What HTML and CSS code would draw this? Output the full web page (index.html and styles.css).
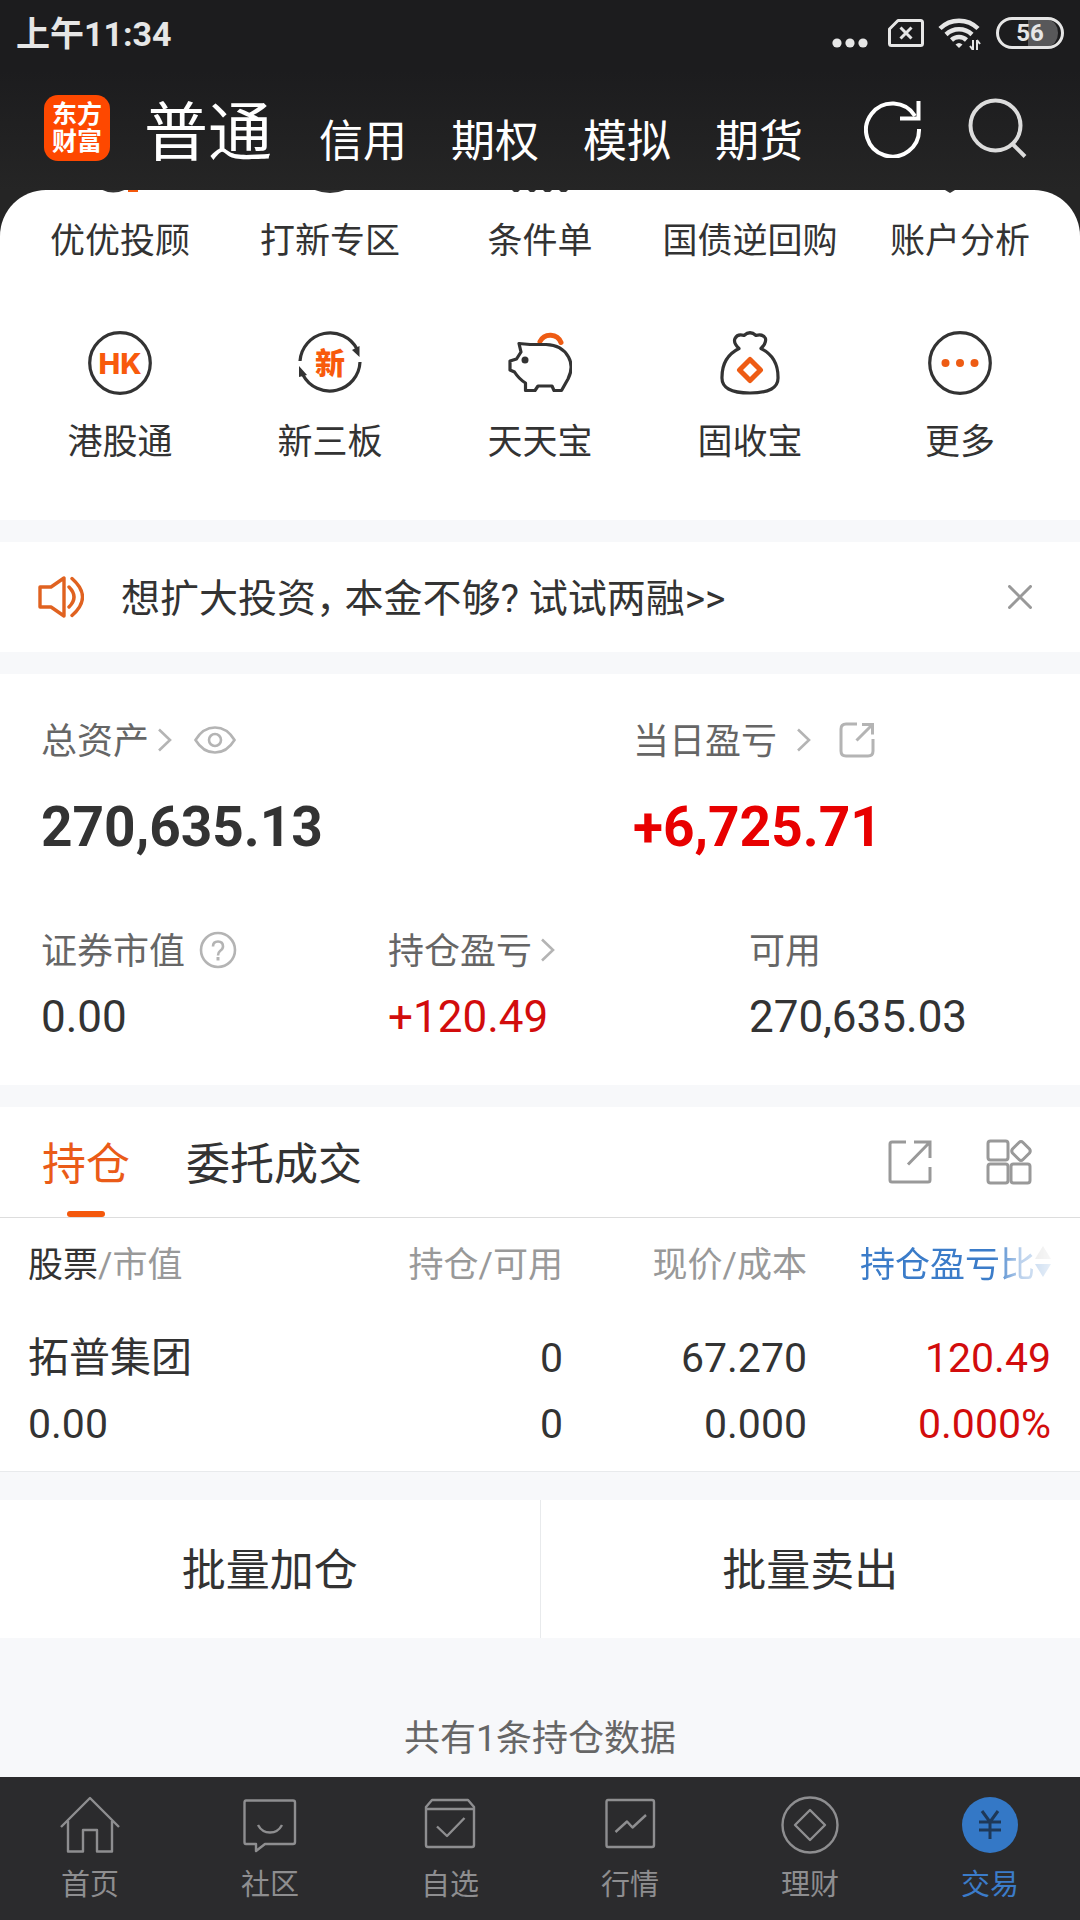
FILE: index.html
```html
<!DOCTYPE html>
<html lang="zh-CN">
<head>
<meta charset="utf-8">
<meta name="viewport" content="width=device-width, initial-scale=1">
<title>交易</title>
<link rel="stylesheet" href="styles.css">
</head>
<body>
<header class="top">
  <div class="status">
    <span class="clock">上午11:34</span>
    <div class="status-icons">
      <svg class="dots" width="36" height="30" viewBox="0 0 36 30" fill="#e6e6e6"><circle cx="5" cy="25" r="4.6"/><circle cx="18" cy="25" r="4.6"/><circle cx="31" cy="25" r="4.6"/></svg>
      <svg width="36" height="30" viewBox="0 0 36 30" fill="none" stroke="#e6e6e6" stroke-width="3"><path d="M10 2.500H32.500Q34.500 2.500 34.500 4.500V25.500Q34.500 27.500 32.500 27.500H3.500Q1.500 27.500 1.500 25.500V11Z" stroke-linejoin="round"/><path d="M12.500 9.500l11 11M23.500 9.500l-11 11"/></svg>
      <svg width="44" height="34" viewBox="0 0 44 34" fill="none" stroke="#e6e6e6" stroke-width="4.500"><path d="M2 12.500A27 27 0 0 1 40 12.500"/><path d="M8 18.500A19 19 0 0 1 34 18.500"/><path d="M13.500 24A11 11 0 0 1 28.500 24"/><path d="M17.500 28.500L21 32l3.500-3.500Q21 25.500 17.500 28.500Z" fill="#e6e6e6" stroke="none"/><path d="M35 24v10M35 34l-3-4M39 34V24M39 24l3 4" stroke-width="2"/></svg>
      <span class="battery">56</span>
    </div>
  </div>
  <div class="appbar">
    <a class="logo" href="#"><span>东方</span><span>财富</span></a>
    <nav class="accounts">
      <a class="current" href="#">普通</a>
      <a href="#">信用</a>
      <a href="#">期权</a>
      <a href="#">模拟</a>
      <a href="#">期货</a>
    </nav>
    <div class="tools">
      <button type="button" aria-label="刷新"><svg width="58" height="60" viewBox="0 0 58 60" fill="none" stroke="#fff" stroke-width="4"><path d="M55 31A26.500 26.500 0 1 1 51 18"/><path d="M54.500 3V20.500H36"/></svg></button>
      <button type="button" aria-label="搜索"><svg width="60" height="60" viewBox="0 0 60 60" fill="none" stroke="#dcdcdc" stroke-width="4"><circle cx="27.500" cy="27.500" r="25"/><path d="M44.500 46L57 58.500"/></svg></button>
    </div>
  </div>
</header>

<main>
  <div class="backdrop">
  <section class="panel shortcuts">
    <a href="#"><svg width="64" height="4" viewBox="0 0 64 4" fill="none" stroke-width="4"><path d="M15-2Q25 3 36-2" stroke="#333"/><path d="M40 0L50 0" stroke="#f4580c"/></svg>优优投顾</a>
    <a href="#"><svg width="64" height="4" viewBox="0 0 64 4" fill="none" stroke="#333" stroke-width="3"><path d="M16-2Q32 5 48-2"/></svg>打新专区</a>
    <a href="#"><svg width="64" height="4" viewBox="0 0 64 4" fill="#333"><path d="M4 0h8l-2 2H6zM20 0h8l-2 2h-4zM35 0h9l-2 2h-5zM51 0h9l-2 2h-5z"/></svg>条件单</a>
    <a href="#"><svg width="64" height="4" viewBox="0 0 64 4"></svg>国债逆回购</a>
    <a href="#"><svg width="64" height="4" viewBox="0 0 64 4" fill="#333"><path d="M17 0h10l-5 3z"/></svg>账户分析</a>
    <a href="#"><svg width="64" height="64" viewBox="0 0 64 64" fill="none"><circle cx="32" cy="32" r="30.300" stroke="#333" stroke-width="3.200"/><text x="32" y="42.500" text-anchor="middle" class="hk">HK</text></svg>港股通</a>
    <a href="#"><svg width="64" height="64" viewBox="0 0 64 64" fill="none"><path d="M2 30A30.300 30.300 0 0 1 59 18M62 31A30.300 30.300 0 0 1 5 44" stroke="#333" stroke-width="3.200"/><path d="M54 19l7.500-4v11zM1 46V35l8 9z" fill="#333"/><text x="32" y="43" text-anchor="middle" class="xin">新</text></svg>新三板</a>
    <a href="#"><svg width="64" height="64" viewBox="0 0 64 64" fill="none" stroke="#333" stroke-width="3.200" stroke-linejoin="round"><path d="M32 10.500A11.500 11.500 0 0 1 53 11.500" stroke="#ee5c14" stroke-width="5" stroke-linecap="round"/><path d="M22 13.500L11 12.500L13 21L8.500 28L2 30V39L6.500 41Q11 48 17.500 52V59.500H27L30 55H44L46 59.500H53.500L60 48Q66 36 60.500 26Q54 14 38 13.500Z" fill="#fff"/><circle cx="17" cy="29" r="3.500" fill="#333" stroke="none"/></svg>天天宝</a>
    <a href="#"><svg width="64" height="64" viewBox="0 0 64 64" fill="none" stroke="#333" stroke-width="3.200" stroke-linejoin="round"><path d="M21 17.500Q15 12 17 7.500Q19.500 2.500 26 4.500Q32-1 38 4.500Q45 2.500 47.500 7.500Q48.500 12 43 17.500Q60 26 60 46Q61 62 32 62Q3 62 4 46Q4 26 21 17.500Z"/><path d="M32 28.500L42.500 39L32 49.500L21.500 39Z" stroke="#ee5c14" stroke-width="5"/></svg>固收宝</a>
    <a href="#"><svg width="64" height="64" viewBox="0 0 64 64" fill="none"><circle cx="32" cy="32" r="30.300" stroke="#333" stroke-width="3.200"/><g fill="#ee5c14"><circle cx="17.500" cy="32" r="4"/><circle cx="32" cy="32" r="4"/><circle cx="46.500" cy="32" r="4"/></g></svg>更多</a>
  </section>
  </div>

  <section class="panel notice">
    <svg width="46" height="42" viewBox="0 0 46 42" fill="none" stroke="#e06220" stroke-width="3.400" stroke-linejoin="round"><path d="M2 11H13L26 2V40L13 31H2Z"/><path d="M31 11Q41 21 31 31M34 2.500Q55 21 34 39.500" stroke-linecap="round"/></svg>
    <a href="#">想扩大投资<span class="comma">，</span>本金不够? 试试两融&gt;&gt;</a>
    <button type="button" aria-label="关闭"><svg width="24" height="24" viewBox="0 0 24 24" stroke="#999" stroke-width="3" stroke-linecap="round"><path d="M1.500 1.500l21 21M22.500 1.500l-21 21"/></svg></button>
  </section>

  <section class="panel assets">
    <div class="totals">
      <div>
        <div class="label"><span>总资产</span><svg class="chev" width="14" height="24" viewBox="0 0 14 24"><path d="M1 1.500L12 12L1 22.500"/></svg><svg class="eye" width="42" height="28" viewBox="0 0 42 28" fill="none" stroke="#b4b4b4" stroke-width="2.600"><path d="M1.500 14Q9 1.500 21 1.500T40.500 14Q33 26.500 21 26.500T1.500 14Z"/><circle cx="21" cy="14" r="6"/></svg></div>
        <div class="big">270,635.13</div>
      </div>
      <div>
        <div class="label"><span>当日盈亏</span><svg class="chev wide" width="14" height="24" viewBox="0 0 14 24"><path d="M1 1.500L12 12L1 22.500"/></svg><svg class="share" width="36" height="36" viewBox="0 0 36 36" fill="none" stroke="#b4b4b4" stroke-width="3"><path d="M18 2H7Q2 2 2 7V29Q2 34 7 34H29Q34 34 34 29V17M17.500 18.500L33 3M23 2.500H33.500V12.500"/></svg></div>
        <div class="big rise">+6,725.71</div>
      </div>
    </div>
    <div class="details">
      <div>
        <div class="label"><span>证券市值</span><svg class="help" width="38" height="38" viewBox="0 0 38 38" fill="none" stroke="#b4b4b4" stroke-width="2.600"><circle cx="19" cy="19" r="17"/><path d="M14 15.500Q14 10.500 19 10.500T24 15.500Q24 18 21 20Q19 21.500 19 24.500" /><path d="M19 26v3.500" stroke-width="3"/></svg></div>
        <div class="value">0.00</div>
      </div>
      <div>
        <div class="label"><span>持仓盈亏</span><svg class="chev" width="14" height="24" viewBox="0 0 14 24"><path d="M1 1.500L12 12L1 22.500"/></svg></div>
        <div class="value loss">+120.49</div>
      </div>
      <div>
        <div class="label"><span>可用</span></div>
        <div class="value">270,635.03</div>
      </div>
    </div>
  </section>

  <section class="panel">
    <div class="tabs">
      <button type="button" class="tab active">持仓</button>
      <button type="button" class="tab">委托成交</button>
      <div class="tab-tools">
        <button type="button" aria-label="分享"><svg width="44" height="44" viewBox="0 0 44 44" fill="none" stroke="#999" stroke-width="3"><path d="M18 2H4Q2 2 2 4V40Q2 42 4 42H40Q42 42 42 40V27M20 24.500L41 3M26 2H42V18" /></svg></button>
        <button type="button" aria-label="布局"><svg width="46" height="46" viewBox="0 0 46 46" fill="none" stroke="#999" stroke-width="3"><rect x="2" y="2" width="20" height="19" rx="2.500"/><rect x="2" y="25" width="20" height="19" rx="2.500"/><rect x="25" y="25" width="19" height="19" rx="2.500"/><path d="M33 3.500Q35 1.500 37 3.500L43.500 10Q45 12 43.500 14L37 20.500Q35 22.500 33 20.500L26.500 14Q25 12 26.500 10Z"/></svg></button>
      </div>
    </div>
    <table class="holdings">
      <thead>
        <tr>
          <th scope="col"><b>股票</b>/市值</th>
          <th scope="col">持仓/可用</th>
          <th scope="col">现价/成本</th>
          <th scope="col"><button type="button" class="sort">持仓盈亏比<svg width="16" height="32" viewBox="0 0 16 32"><path d="M0 14L8 1L16 14Z" fill="#bbb"/><path d="M0 19L8 32L16 19Z" fill="#3b7cc9"/></svg></button></th>
        </tr>
      </thead>
      <tbody>
        <tr><td>拓普集团</td><td>0</td><td>67.270</td><td class="loss">120.49</td></tr>
        <tr><td>0.00</td><td>0</td><td>0.000</td><td class="loss">0.000%</td></tr>
      </tbody>
    </table>
  </section>

  <div class="batch">
    <button type="button">批量加仓</button>
    <button type="button">批量卖出</button>
  </div>
  <p class="count">共有1条持仓数据</p>
</main>

<nav class="bottom">
  <a href="#"><svg width="60" height="60" viewBox="0 0 60 60"><path d="M1 31L30 2L59 31M8 25V55.500H23V34H37V55.500H52V25"/></svg>首页</a>
  <a href="#"><svg width="60" height="60" viewBox="0 0 60 60"><path d="M6 4.500H53Q55 4.500 55 6.500V46Q55 48 53 48H25L16 55V48H6Q4.500 48 4.500 46V6.500Q4.500 4.500 6 4.500ZM18 29Q22 36.500 30 36.500T42 29"/></svg>社区</a>
  <a href="#"><svg width="60" height="60" viewBox="0 0 60 60"><path d="M12 4H48L54 11V49Q54 51 52 51H8Q6 51 6 49V11ZM6 13H54M17 30.500L27 40L44.500 22"/></svg>自选</a>
  <a href="#"><svg width="60" height="60" viewBox="0 0 60 60"><path d="M8 4H52Q54 4 54 6V49Q54 51 52 51H8Q6.500 51 6.500 49V6Q6.500 4 8 4ZM15.500 36L27 25.500L32.500 31.500L46 19"/></svg>行情</a>
  <a href="#"><svg width="60" height="60" viewBox="0 0 60 60"><circle cx="30" cy="29" r="27.500"/><path d="M30 14L45 29L30 44L15 29Z"/></svg>理财</a>
  <a class="on" href="#"><svg width="60" height="60" viewBox="0 0 60 60"><circle cx="30" cy="29" r="28" fill="#3478c6" stroke="none"/><path d="M22 15L30 26L38 15M30 26V43M19 26H41M19 34H41" stroke="#1e3857" stroke-width="3"/></svg>交易</a>
</nav>
</body>
</html>
```
FILE: styles.css
```css
* { box-sizing: border-box; }

body {
  margin: 0;
  min-height: 100vh;
  display: flex;
  flex-direction: column;
  background: #f7f8fa;
  color: #333;
  font-family: Roboto, "Noto Sans CJK SC", sans-serif;
}

a { color: inherit; text-decoration: none; }
svg { display: block; flex: none; }

button {
  margin: 0;
  padding: 0;
  border: 0;
  background: none;
  color: inherit;
  font: inherit;
}

/* Status bar and account switcher */
.top {
  background: linear-gradient(#1c1c1e 70px, #252525);
  color: #fff;
}

.status {
  display: flex;
  align-items: center;
  justify-content: space-between;
  height: 66px;
  padding: 0 16px;
  color: #e6e6e6;
}

.clock { padding-bottom: 4px; font-size: 34px; font-weight: 700; }

.status-icons { display: flex; align-items: center; gap: 14px; }
.dots { margin-right: 6px; }

.battery {
  width: 68px;
  height: 32px;
  border: 3px solid #e6e6e6;
  border-radius: 16px;
  padding: 0 3px;
  font-size: 24px;
  font-weight: 700;
  line-height: 26px;
  text-align: center;
  background: linear-gradient(90deg, transparent 46%, #58585a 46%) content-box;
}

.appbar {
  display: flex;
  align-items: center;
  height: 124px;
  padding: 0 52px 0 44px;
}

.logo {
  display: flex;
  flex-direction: column;
  align-items: center;
  justify-content: center;
  width: 66px;
  height: 66px;
  border-radius: 14px;
  background: #fe4800;
  font-size: 25px;
  font-weight: 700;
  line-height: 27px;
}

.accounts {
  display: flex;
  align-items: flex-end;
  gap: 44px;
  margin: 12px 0 0 34px;
  font-size: 44px;
  line-height: 64px;
}

.accounts .current { margin-right: 3px; font-size: 64px; line-height: 80px; }

.tools { display: flex; gap: 46px; margin-left: auto; }

/* White sections */
.panel { background: #fff; margin-bottom: 22px; }
.backdrop { background: linear-gradient(#252525 60px, transparent 60px); }

.shortcuts {
  display: grid;
  grid-template-columns: repeat(5, 1fr);
  row-gap: 67px;
  padding: 0 15px 55px;
  border-radius: 46px 46px 0 0;
  font-size: 35px;
  line-height: 44px;
}

.shortcuts a {
  display: flex;
  flex-direction: column;
  align-items: center;
  gap: 26px;
  white-space: nowrap;
}

.hk { font: 800 29px Inter, sans-serif; fill: #f85a0c; }
.xin { font: 900 30px "Noto Sans CJK SC", sans-serif; fill: #f85a0c; }

.notice {
  display: flex;
  align-items: center;
  gap: 37px;
  height: 110px;
  padding: 0 48px 0 38px;
  font-size: 39px;
}

.notice a { padding-bottom: 4px; }
.notice button { margin-left: auto; }
.comma { margin-right: 9px; font-feature-settings: "halt"; }

/* Asset figures */
.assets { padding: 44px 0 42px 41px; }
.totals { display: grid; grid-template-columns: 592fr 447fr; margin-bottom: 69px; }
.details { display: grid; grid-template-columns: 347fr 361fr 331fr; }

.label {
  display: flex;
  align-items: center;
  height: 44px;
  color: #666;
  font-size: 36px;
}

.label span { padding-bottom: 4px; }

.chev { margin-left: 9px; fill: none; stroke: #b4b4b4; stroke-width: 2.6; }
.chev.wide { margin-left: 20px; }
.eye { margin-left: 22px; }
.share { margin-left: 28px; }
.help { margin-left: 14px; }

.big { margin-top: 33px; font-size: 55px; font-weight: 700; line-height: 64px; }
.value { margin-top: 19px; font-size: 44px; line-height: 52px; }
.rise { color: #e80000; }
.loss { color: #d20c0c; }

/* Holdings */
.tabs {
  display: flex;
  align-items: stretch;
  gap: 56px;
  height: 111px;
  padding: 0 48px 0 42px;
  border-bottom: 1px solid #ddd;
  font-size: 44px;
}

.tab { display: grid; position: relative; align-items: center; padding-bottom: 2px; }
.active { color: #ea5b18; }

.active::after {
  content: "";
  position: absolute;
  left: 50%;
  bottom: 0;
  width: 38px;
  height: 6px;
  margin-left: -19px;
  border-radius: 3px;
  background: #f4580c;
}

.tab-tools { display: flex; align-items: center; gap: 54px; margin-left: auto; }

.holdings {
  width: 100%;
  border-collapse: collapse;
  table-layout: fixed;
  border-bottom: 1px solid #e8eaec;
}

.holdings th {
  height: 90px;
  padding: 0 0 4px;
  color: #999;
  font-size: 35px;
  font-weight: 400;
  text-align: right;
  white-space: nowrap;
}

.holdings th:nth-child(2), .holdings th:nth-child(3) { width: 244px; }
.holdings th:last-child { width: 273px; }
.holdings th:first-child, .holdings td:first-child { padding-left: 28px; text-align: left; }
.holdings th:last-child, .holdings td:last-child { padding-right: 29px; }
.holdings b { color: #333; font-weight: 400; }
.holdings td { height: 66px; padding: 0; font-size: 41px; line-height: 48px; text-align: right; }
.holdings tbody::before { content: ""; display: table-row; height: 17px; }
.holdings tbody::after { content: ""; display: table-row; height: 14px; }

.sort {
  display: inline-flex;
  align-items: center;
  color: #3b7cc9;
  mask-image: linear-gradient(90deg, #000 70%, rgba(0, 0, 0, 0.35) 84%, rgba(0, 0, 0, 0.12));
}

.batch {
  display: flex;
  margin-top: 28px;
  background: #fff;
  font-size: 44px;
}

.batch button { flex: 1; height: 138px; padding-bottom: 4px; }
.batch button:first-child { border-right: 1px solid #e8eaec; }

.count { margin: 79px 0 16px; color: #666; font-size: 36px; line-height: 44px; text-align: center; }

/* Bottom navigation */
.bottom {
  display: grid;
  grid-template-columns: repeat(6, 1fr);
  margin-top: auto;
  padding: 19px 0 17px;
  background: #2b2b2d;
  color: #8e8e90;
  font-size: 29px;
  line-height: 36px;
}

.bottom a { display: flex; flex-direction: column; align-items: center; gap: 11px; }
.bottom svg { fill: none; stroke: #8e8e90; stroke-width: 2.4; stroke-linejoin: round; }
.bottom .on { color: #3b7cc9; }
```
